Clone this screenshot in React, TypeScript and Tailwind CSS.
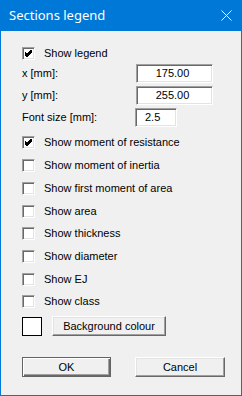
import React from "react";

const font = { fontFamily: '"Liberation Sans", Arial, sans-serif' };

function Check({ checked }: { checked?: boolean }) {
  return (
    <div className="relative w-[13px] h-[13px] bg-white border border-t-[#a0a0a0] border-l-[#a0a0a0] border-b-white border-r-white shadow-[inset_1px_1px_0_#696969,inset_-1px_-1px_0_#e3e3e3] shrink-0">
      {checked && (
        <svg className="absolute left-0 top-0" width="11" height="11" viewBox="0 0 11 11">
          <path d="M2 4.5 L4 6.5 L8.5 2 M2 5.5 L4 7.5 L8.5 3 M2 6.5 L4 8.5 L8.5 4" stroke="#000" strokeWidth="1" fill="none" shapeRendering="crispEdges" />
        </svg>
      )}
    </div>
  );
}

function CheckRow({ label, checked, h }: { label: string; checked?: boolean; h: string }) {
  return (
    <div className={`flex items-center ${h}`}>
      <Check checked={checked} />
      <span className="ml-[9px] text-[11px] leading-none text-black">{label}</span>
    </div>
  );
}

function TextBox({ value, w, align }: { value: string; w: string; align: string }) {
  return (
    <div
      className={`${w} h-[19px] bg-white border border-t-[#a0a0a0] border-l-[#a0a0a0] border-b-white border-r-white shadow-[inset_1px_1px_0_#696969,inset_-1px_-1px_0_#e3e3e3] flex items-center ${align} text-[11px] text-black`}
    >
      {value}
    </div>
  );
}

function Button({ label, w, def }: { label: string; w: string; def?: boolean }) {
  return (
    <div
      className={`${w} h-[20px] flex items-center justify-center text-[11px] text-black bg-[#f0f0f0] ${
        def
          ? "border border-[#646464] shadow-[inset_1px_1px_0_#ffffff,inset_-1px_-1px_0_#696969,inset_-2px_-2px_0_#a0a0a0]"
          : "border border-t-white border-l-white border-b-[#696969] border-r-[#696969] shadow-[inset_-1px_-1px_0_#a0a0a0,inset_1px_1px_0_#e3e3e3]"
      }`}
    >
      {label}
    </div>
  );
}

export default function App() {
  return (
    <div className="w-[242px] h-[396px] bg-[#0078d7] flex flex-col" style={font}>
      <div className="h-[31px] flex items-center justify-between pl-[9px] pr-[10px] text-white">
        <span className="text-[13px]" style={{ fontFamily: '"Noto Sans", "Open Sans", sans-serif' }}>
          Sections legend
        </span>
        <svg width="11" height="11" viewBox="0 0 11 11">
          <path d="M0.5 0.5 L10.5 10.5 M10.5 0.5 L0.5 10.5" stroke="#fff" strokeWidth="1" />
        </svg>
      </div>
      <div className="flex-1 mx-[1px] mb-[1px] bg-[#f0f0f0] flex flex-col pl-[21px]">
        <div className="mt-[16px]">
          <CheckRow label="Show legend" checked h="h-[13px]" />
        </div>
        <div className="mt-[4px] flex items-center justify-between pr-[28px] h-[19px]">
          <span className="text-[11px]">x [mm]:</span>
          <TextBox value="175.00" w="w-[77px]" align="justify-center pr-[4px]" />
        </div>
        <div className="mt-[3px] flex items-center justify-between pr-[28px] h-[19px]">
          <span className="text-[11px]">y [mm]:</span>
          <TextBox value="255.00" w="w-[77px]" align="justify-center pr-[4px]" />
        </div>
        <div className="mt-[3px] flex items-center h-[19px]">
          <span className="text-[11px] w-[113px]">Font size [mm]:</span>
          <TextBox value="2.5" w="w-[42px]" align="justify-start pl-[9px]" />
        </div>
        <div className="mt-[4px] flex flex-col">
          <CheckRow label="Show moment of resistance" checked h="h-[23px]" />
          <CheckRow label="Show moment of inertia" h="h-[23px]" />
          <CheckRow label="Show first moment of area" h="h-[23px]" />
          <CheckRow label="Show area" h="h-[22px]" />
          <CheckRow label="Show thickness" h="h-[23px]" />
          <CheckRow label="Show diameter" h="h-[23px]" />
          <CheckRow label="Show EJ" h="h-[22px]" />
          <CheckRow label="Show class" h="h-[23px]" />
        </div>
        <div className="mt-[3px] flex items-center">
          <div className="w-[20px] h-[19px] bg-white border border-black" />
          <div className="ml-[10px]">
            <Button label="Background colour" w="w-[114px]" />
          </div>
        </div>
        <div className="mt-[21px] flex items-center">
          <Button label="OK" w="w-[89px]" def />
          <div className="ml-[24px]">
            <Button label="Cancel" w="w-[90px]" />
          </div>
        </div>
      </div>
    </div>
  );
}
